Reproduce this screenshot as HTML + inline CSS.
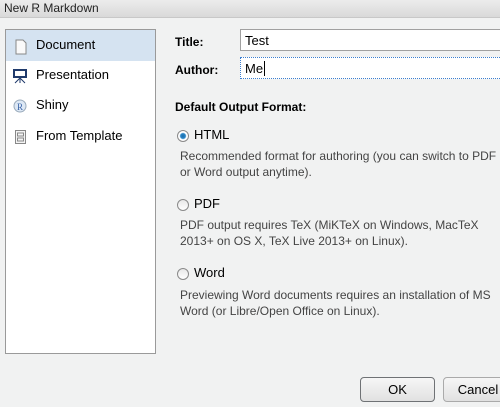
<!DOCTYPE html>
<html><head><style>
body{margin:0;width:500px;height:407px;background:#f1f2f2;font-family:"Liberation Sans",sans-serif;font-size:12px;color:#000;position:relative;overflow:hidden}
.a{position:absolute;white-space:nowrap}
.tb{left:0;top:0;width:500px;height:17px;background:linear-gradient(#ececec,#d9d9d9);border-bottom:1px solid #c8c8c8}
.list{left:5px;top:29px;width:149px;height:323px;background:#fff;border:1px solid #9a9a9a}
.sel{left:0;top:0;width:149px;height:31px;background:#d5e3f1}
.inp{left:240px;width:262px;height:22px;background:#fff;border:1px solid #a0a0a0;box-sizing:border-box;padding:3px 4px;font-size:13px}
.rad{width:10px;height:10px;border-radius:50%;border:1px solid #8a8a8a;background:linear-gradient(#e8e8e8,#fff)}
.d{color:#444}
.btn{top:377px;height:25px;border:1px solid #8e8f8f;border-radius:4px;background:linear-gradient(#f6f6f6,#e1e1e1);text-align:center;line-height:24px;font-size:13px;box-sizing:border-box}
</style></head><body>
<div class="a tb"></div>
<div class="a" style="left:4px;top:1px;font-size:12px;color:#222">New R Markdown</div>
<div class="a list">
 <div class="a sel"></div>
 <svg class="a" style="left:9px;top:9px" width="12" height="16"><path d="M1 1h7l3 3v11H1z" fill="#fafafa" stroke="#888"/></svg>
 <div class="a" style="left:30px;top:7px;font-size:13px">Document</div>
 <svg class="a" style="left:7px;top:38px" width="14" height="16"><rect x="1" y="2" width="12" height="7" fill="none" stroke="#1f3a6b" stroke-width="2"/><path d="M7 9v6M7 10l-5 5M7 10l5 5" stroke="#1f3a6b"/></svg>
 <div class="a" style="left:30px;top:37px;font-size:13px">Presentation</div>
 <svg class="a" style="left:7px;top:69px" width="14" height="14"><circle cx="7" cy="7" r="6" fill="#dde8f5" stroke="#9ab"/><text x="4" y="11" font-size="9" fill="#3a64a8" font-family="Liberation Serif">R</text></svg>
 <div class="a" style="left:30px;top:67px;font-size:13px">Shiny</div>
 <svg class="a" style="left:9px;top:100px" width="12" height="15"><rect x="0.5" y="0.5" width="10" height="13" fill="#f4f4f4" stroke="#888"/><rect x="2.5" y="3" width="6" height="3" fill="none" stroke="#888"/><rect x="2.5" y="8" width="6" height="3" fill="none" stroke="#888"/></svg>
 <div class="a" style="left:30px;top:98px;font-size:13px">From Template</div>
</div>
<div class="a" style="left:175px;top:35px;font-weight:bold;font-size:12px">Title:</div>
<div class="a inp" style="top:29px">Test</div>
<div class="a" style="left:175px;top:63px;font-weight:bold;font-size:12px">Author:</div>
<div class="a inp" style="top:57px;border:1px dotted #3c7fd0">Me<span style="border-left:1px solid #000;margin-left:1px"></span></div>
<div class="a" style="left:175px;top:100px;font-weight:bold">Default Output Format:</div>
<div class="a rad" style="left:177px;top:130px;background:radial-gradient(circle,#1b6aa8 0,#2a87c8 2.5px,#fff 3.5px)"></div>
<div class="a" style="left:194px;top:127px;font-size:13px">HTML</div>
<div class="a d" style="left:180px;top:149px">Recommended format for authoring (you can switch to PDF</div>
<div class="a d" style="left:180px;top:165px">or Word output anytime).</div>
<div class="a rad" style="left:177px;top:199px"></div>
<div class="a" style="left:194px;top:196px;font-size:13px">PDF</div>
<div class="a d" style="left:180px;top:218px">PDF output requires TeX (MiKTeX on Windows, MacTeX</div>
<div class="a d" style="left:180px;top:234px">2013+ on OS X, TeX Live 2013+ on Linux).</div>
<div class="a rad" style="left:177px;top:268px"></div>
<div class="a" style="left:194px;top:265px;font-size:13px">Word</div>
<div class="a d" style="left:180px;top:288px">Previewing Word documents requires an installation of MS</div>
<div class="a d" style="left:180px;top:304px">Word (or Libre/Open Office on Linux).</div>
<div class="a btn" style="left:360px;width:75px;border-color:#6f7275">OK</div>
<div class="a btn" style="left:443px;width:70px;border-color:#aaa">Cancel</div>
</body></html>
